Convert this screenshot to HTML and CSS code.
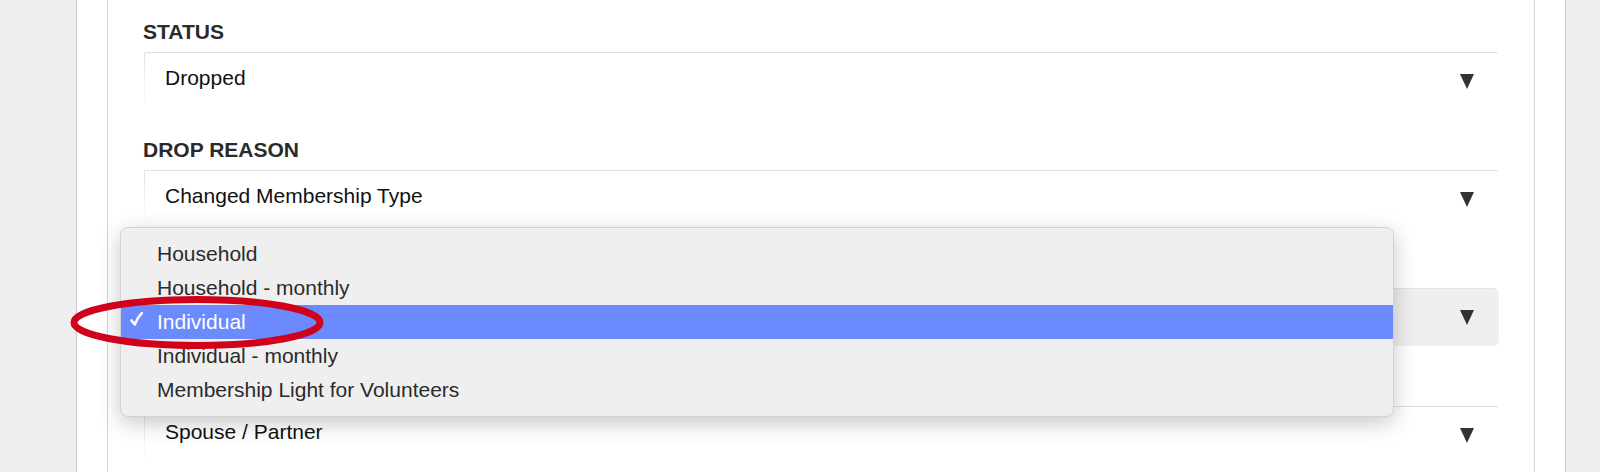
FILE: index.html
```html
<!DOCTYPE html>
<html>
<head>
  <meta charset="UTF-8">
  <meta name="viewport" content="width=device-width, initial-scale=1.0">
  <title>Membership Details</title>
  <link rel="stylesheet" href="styles.css">
</head>
<body>
  <div class="page">
    <div class="panel">
      <div class="field">
        <label class="field-label">Status</label>
        <div class="select">
          <span class="select-value">Dropped</span>
          <svg class="arrow" width="14" height="15" viewBox="0 0 14 15"><polygon points="0,0 14,0 7,15"/></svg>
        </div>
      </div>

      <div class="field">
        <label class="field-label">Drop Reason</label>
        <div class="select">
          <span class="select-value">Changed Membership Type</span>
          <svg class="arrow" width="14" height="15" viewBox="0 0 14 15"><polygon points="0,0 14,0 7,15"/></svg>
        </div>
      </div>

      <!-- label and value sit under the open menu -->
      <div class="field">
        <div class="field-label"></div>
        <div class="select select-open">
          <span class="select-value"></span>
          <svg class="arrow" width="14" height="15" viewBox="0 0 14 15"><polygon points="0,0 14,0 7,15"/></svg>
        </div>
      </div>

      <div class="field">
        <div class="field-label"></div>
        <div class="select">
          <span class="select-value">Spouse / Partner</span>
          <svg class="arrow" width="14" height="15" viewBox="0 0 14 15"><polygon points="0,0 14,0 7,15"/></svg>
        </div>
      </div>
    </div>
  </div>

  <!-- open dropdown for membership type -->
  <ul class="menu">
    <li class="menu-item"><span class="check"></span>Household</li>
    <li class="menu-item"><span class="check"></span>Household - monthly</li>
    <li class="menu-item selected">
      <span class="check"><svg width="13" height="14" viewBox="0 0 13 14"><path d="M1.5 8.5 L4.8 12.5 C6.5 8 8.5 4.5 11.8 1.2"/></svg></span>Individual
    </li>
    <li class="menu-item"><span class="check"></span>Individual - monthly</li>
    <li class="menu-item"><span class="check"></span>Membership Light for Volunteers</li>
  </ul>

  <!-- annotation -->
  <svg class="highlight-ring" width="270" height="66" viewBox="0 0 270 66">
    <ellipse cx="133" cy="32.5" rx="123" ry="23" fill="none" stroke="#d0021b" stroke-width="7"/>
  </svg>
</body>
</html>
```

FILE: styles.css
```css
html, body {
  height: 100%;
}
body {
  margin: 0;
  position: relative;
  overflow: hidden;
  background-color: #efefef;
  font-family: "Liberation Sans", Arial, sans-serif;
  color: #222;
}
.page {
  margin-left: 76px;
  width: 1490px;
  height: 100%;
  box-sizing: border-box;
  background: #fff;
  border-left: 1px solid #c9c9c9;
  border-right: 1px solid #c9c9c9;
  padding: 0 30px;
}
.panel {
  height: 100%;
  box-sizing: border-box;
  border-left: 1px solid #d4d4d4;
  border-right: 1px solid #d4d4d4;
  padding: 20px 35px 0 35px;
  display: flex;
  flex-direction: column;
  gap: 28px;
}
.field-label {
  display: block;
  height: 24px;
  font-size: 21px;
  line-height: 24px;
  font-weight: bold;
  text-transform: uppercase;
  color: #2a2a2a;
  margin-bottom: 8px;
}
.select {
  height: 58px;
  box-sizing: border-box;
  display: flex;
  justify-content: space-between;
  align-items: flex-start;
  padding: 13px 24px 0 21px;
  border: 1px solid transparent;
  border-top-color: #e0e0e0;
  border-radius: 4px;
  background: linear-gradient(to bottom, #e2e2e2, rgba(226, 226, 226, 0)) left top / 1px 100% no-repeat, #fff;
}
.select-open {
  background: #efefef;
  border-top-color: #e2e2e2;
  border-radius: 6px;
}
.select-value {
  font-size: 21px;
  line-height: 24px;
  color: #111;
}
.arrow {
  margin-top: 8px;
  fill: #333;
}
.menu {
  position: absolute;
  left: 120px;
  top: 227px;
  width: 1274px;
  margin: 0;
  padding: 9px 0;
  list-style: none;
  box-sizing: border-box;
  background: #efefef;
  border: 1px solid #d2d2d2;
  border-radius: 8px;
  box-shadow: 0 6px 22px rgba(0, 0, 0, 0.22);
}
.menu-item {
  height: 34px;
  line-height: 34px;
  font-size: 21px;
  color: #2b2b2b;
  display: flex;
  align-items: center;
}
.menu-item.selected {
  background: #6a8afe;
  color: #fff;
}
.check {
  width: 36px;
  height: 34px;
  box-sizing: border-box;
  padding: 7px 0 0 9px;
}
.check svg {
  display: block;
  fill: none;
  stroke: #fff;
  stroke-width: 2.6;
  stroke-linecap: round;
  stroke-linejoin: round;
}
.highlight-ring {
  position: absolute;
  left: 64px;
  top: 290px;
}
```
